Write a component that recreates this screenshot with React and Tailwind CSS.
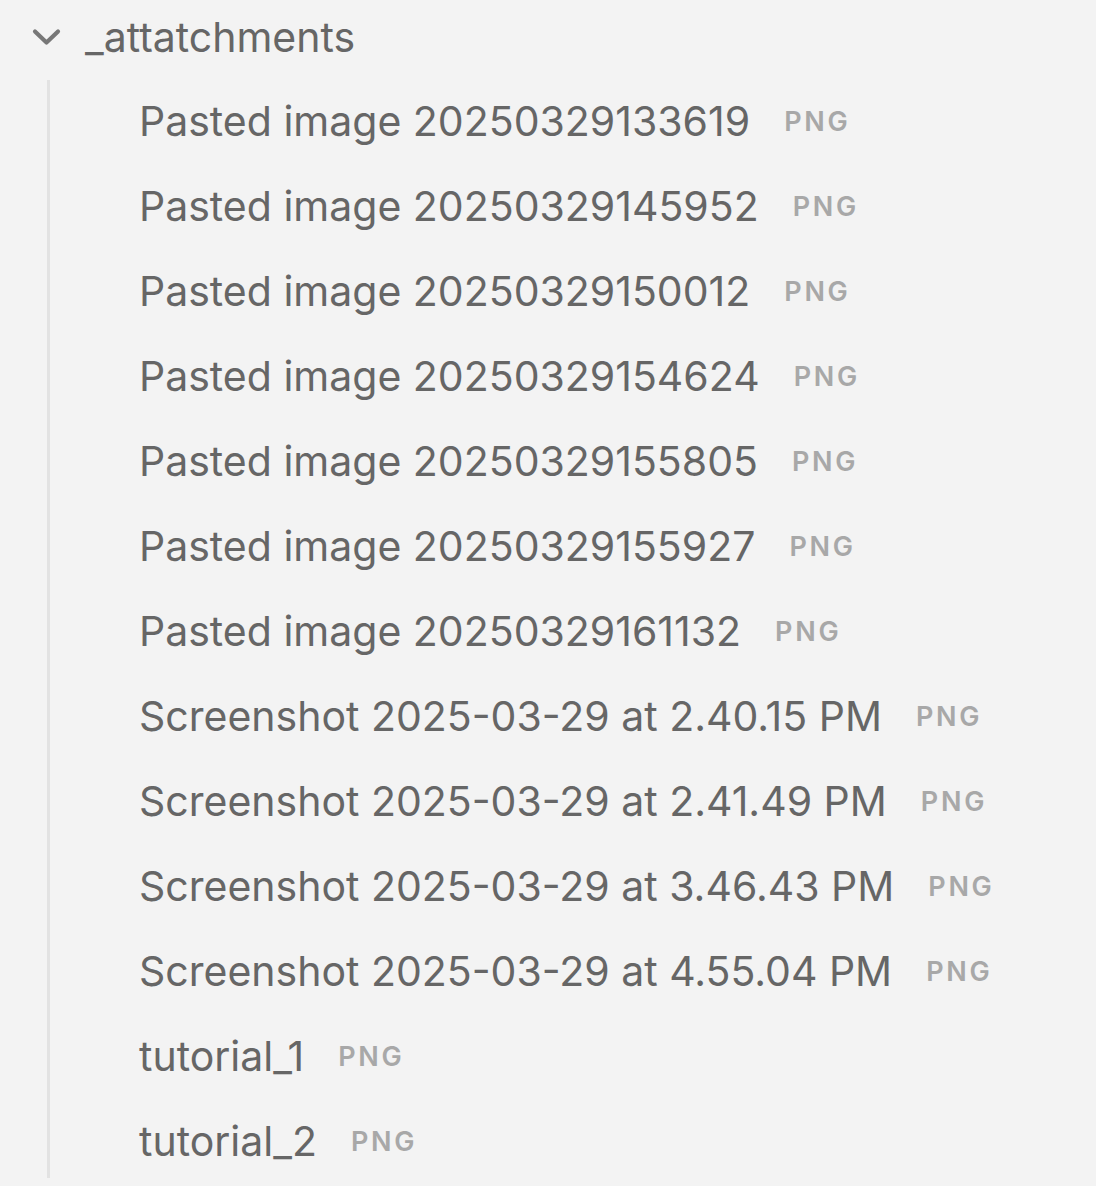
const files = [
  'Pasted image 20250329133619',
  'Pasted image 20250329145952',
  'Pasted image 20250329150012',
  'Pasted image 20250329154624',
  'Pasted image 20250329155805',
  'Pasted image 20250329155927',
  'Pasted image 20250329161132',
  'Screenshot 2025-03-29 at 2.40.15 PM',
  'Screenshot 2025-03-29 at 2.41.49 PM',
  'Screenshot 2025-03-29 at 3.46.43 PM',
  'Screenshot 2025-03-29 at 4.55.04 PM',
  'tutorial_1',
  'tutorial_2',
];

export default function App() {
  return (
    <div className="w-full h-[1186px] overflow-hidden bg-[#f3f3f3] text-[#666666]" style={{ fontFamily: 'Inter, "Noto Sans", sans-serif' }}>
      {/* folder header */}
      <div className="flex items-center h-[74px]">
        <svg className="ml-[31px] w-[31px] h-[20px] text-[#777777]" viewBox="0 0 31 20" fill="none" stroke="currentColor" strokeWidth="4.2" strokeLinecap="round" strokeLinejoin="round">
          <path d="M4 4.5 L15.5 15.5 L27 4.5" />
        </svg>
        <span className="ml-[23px] text-[41px] leading-none">_attatchments</span>
      </div>

      {/* children */}
      <div className="ml-[47px] mt-[6px] h-[1098px] border-l-[3px] border-[#e2e2e2]">
        {files.map((name) => (
          <div key={name} className="flex items-center h-[85px] pl-[89px] pb-[2px]">
            <span className="text-[41px] leading-none whitespace-nowrap">{name}</span>
            <span className="ml-[34px] text-[27px] font-semibold tracking-[0.1em] text-[#a8a8a8] leading-none">PNG</span>
          </div>
        ))}
      </div>
    </div>
  );
}
